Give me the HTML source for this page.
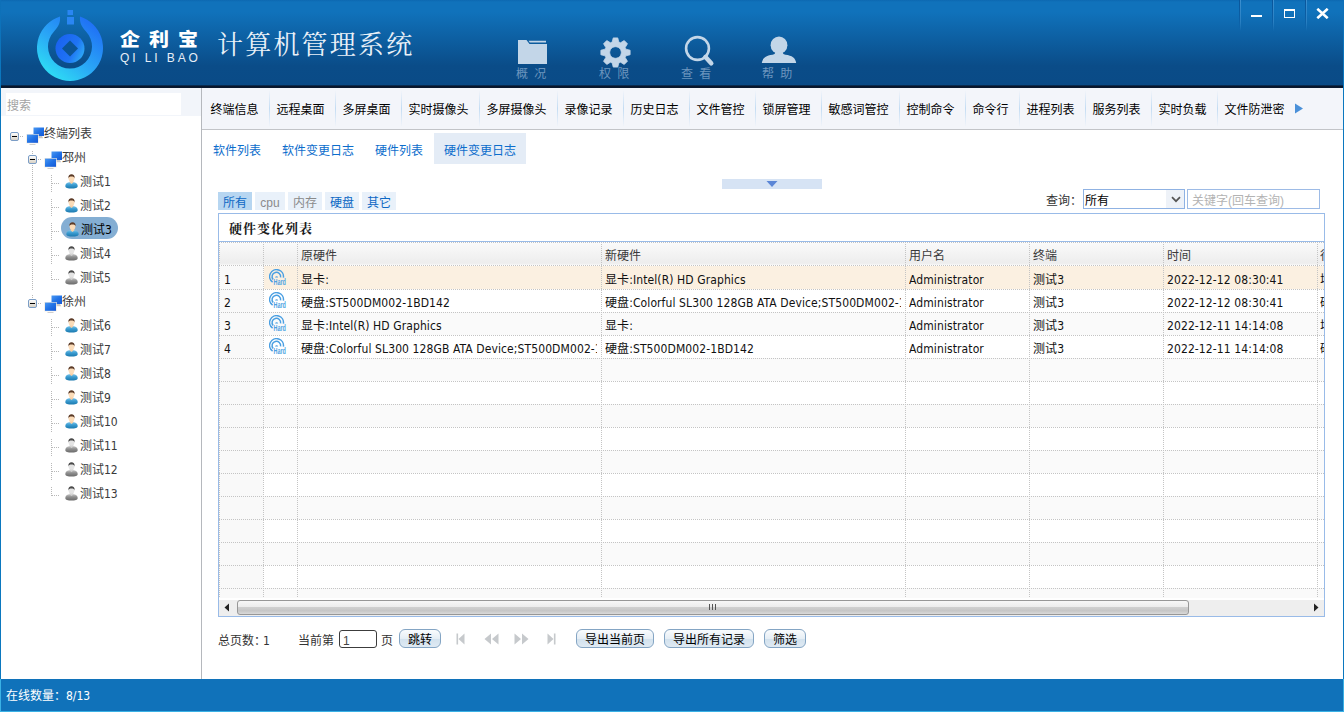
<!DOCTYPE html>
<html lang="zh-CN">
<head>
<meta charset="utf-8">
<title>企利宝 计算机管理系统</title>
<style>
*{box-sizing:border-box;margin:0;padding:0}
html,body{width:1344px;height:712px;overflow:hidden;background:#fff}
body{position:relative;font-family:"Liberation Sans","Noto Sans CJK SC",sans-serif;font-size:12px;color:#000}
.abs{position:absolute}
#hdr{left:0;top:0;width:1344px;height:86px;background:linear-gradient(#0d68b1 0px,#1072bb 2px,#1072bb 12px,#0a4c88 66px,#0a4b87 86px)}
#hdrline{left:0;top:85px;width:1344px;height:3px;background:linear-gradient(#093a68,#08152b 40%,#0a1a30)}
#lb{left:0;top:0;width:1px;height:712px;background:linear-gradient(#0e70b8 0,#0b78bf 88px,#0b78bf 679px,#3ab1e5 679px)}
#rb{left:1343px;top:0;width:1px;height:712px;background:linear-gradient(#0e70b8 0,#0b78bf 88px,#0b78bf 679px,#3ab1e5 679px)}
#status{left:0;top:679px;width:1344px;height:33px;background:#1072ba;color:#fff;line-height:34px;padding-left:6px;font-size:12px;font-family:"DejaVu Sans Condensed","Liberation Sans","Noto Sans CJK SC",sans-serif;border-bottom:1px solid #3ab1e5}
#leftp{left:1px;top:88px;width:200px;height:591px;background:#fff}
#vsep{left:201px;top:88px;width:1px;height:591px;background:#b5b8bd}
#searchbg{left:1px;top:88px;width:200px;height:28px;background:#f2f5fa}
#search{left:6px;top:93px;width:175px;height:22px;background:#fff;color:#a3a3a3;font-size:12px;line-height:27px;overflow:hidden;padding-left:1px}
#tabbar{left:202px;top:88px;width:1141px;height:42px;background:#f3f5fa;border-bottom:1px solid #c2c4c8}
.tab{position:absolute;top:88px;height:41px;line-height:44px;font-size:12px;color:#000;white-space:nowrap}
.tsep{position:absolute;top:90px;width:1px;height:37px;background:linear-gradient(#f3f5fa,#c3dcf3 50%,#f3f5fa)}
.stab{position:absolute;top:133px;height:31px;line-height:37px;overflow:hidden;font-size:12px;color:#0c6dcc;white-space:nowrap}
.chip{position:absolute;top:192px;height:18px;line-height:22px;overflow:hidden;font-size:12px;text-align:center;background:#e9f1fa;color:#0b5f9c;white-space:nowrap}
.tree{position:absolute;font-size:12px;line-height:19px;white-space:nowrap;color:#3a3a3a;font-family:"DejaVu Sans Condensed","Liberation Sans","Noto Sans CJK SC",sans-serif}
.lbl{font-size:12px;color:#333;white-space:nowrap;font-family:"DejaVu Sans Condensed","Liberation Sans","Noto Sans CJK SC",sans-serif}
.hdot{position:absolute;left:0;width:1105px;height:1px;background:repeating-linear-gradient(90deg,#c4c4c4 0,#c4c4c4 1px,transparent 1px,transparent 2px)}
.vdot{position:absolute;top:0;width:1px;height:358px;background:repeating-linear-gradient(180deg,#c4c4c4 0,#c4c4c4 1px,transparent 1px,transparent 2px)}
.gh{position:absolute;top:1px;height:22px;line-height:26px;font-size:12px;color:#3a3a3a;white-space:nowrap;overflow:hidden}
.gc{position:absolute;height:23px;line-height:28px;font-size:12px;color:#111;letter-spacing:0.1px;white-space:nowrap;overflow:hidden;font-family:"DejaVu Sans Condensed","Liberation Sans","Noto Sans CJK SC",sans-serif}
.btn{position:absolute;top:629px;height:19px;line-height:21px;overflow:hidden;font-size:12px;color:#000;text-align:center;border:1px solid #84a5c4;border-radius:6px;background:linear-gradient(#f9fbfd,#e6eef5 50%,#d3e2ee 55%,#dfeaf3);white-space:nowrap}
.tv{width:1px;background:repeating-linear-gradient(180deg,#b8b8b8 0,#b8b8b8 1px,transparent 1px,transparent 2px)}
.th{height:1px;background:repeating-linear-gradient(90deg,#b8b8b8 0,#b8b8b8 1px,transparent 1px,transparent 2px)}
</style>
</head>
<body>
<div id="hdr" class="abs"></div>
<div id="hdrline" class="abs"></div>
<div id="leftp" class="abs"></div>
<div id="searchbg" class="abs"></div>
<div id="search" class="abs">搜索</div>
<div id="vsep" class="abs"></div>
<div id="tabbar" class="abs"></div>
<!--TABS-->
<div class="tab" style="left:203.5px;width:66px;padding-left:7px">终端信息</div>
<div class="tsep" style="left:269.0px"></div>
<div class="tab" style="left:269.5px;width:66px;padding-left:7px">远程桌面</div>
<div class="tsep" style="left:335.0px"></div>
<div class="tab" style="left:335.5px;width:66px;padding-left:7px">多屏桌面</div>
<div class="tsep" style="left:401.0px"></div>
<div class="tab" style="left:401.5px;width:78px;padding-left:7px">实时摄像头</div>
<div class="tsep" style="left:479.0px"></div>
<div class="tab" style="left:479.5px;width:78px;padding-left:7px">多屏摄像头</div>
<div class="tsep" style="left:557.0px"></div>
<div class="tab" style="left:557.5px;width:66px;padding-left:7px">录像记录</div>
<div class="tsep" style="left:623.0px"></div>
<div class="tab" style="left:623.5px;width:66px;padding-left:7px">历史日志</div>
<div class="tsep" style="left:689.0px"></div>
<div class="tab" style="left:689.5px;width:66px;padding-left:7px">文件管控</div>
<div class="tsep" style="left:755.0px"></div>
<div class="tab" style="left:755.5px;width:66px;padding-left:7px">锁屏管理</div>
<div class="tsep" style="left:821.0px"></div>
<div class="tab" style="left:821.5px;width:78px;padding-left:7px">敏感词管控</div>
<div class="tsep" style="left:899.0px"></div>
<div class="tab" style="left:899.5px;width:66px;padding-left:7px">控制命令</div>
<div class="tsep" style="left:965.0px"></div>
<div class="tab" style="left:965.5px;width:54px;padding-left:7px">命令行</div>
<div class="tsep" style="left:1019.0px"></div>
<div class="tab" style="left:1019.5px;width:66px;padding-left:7px">进程列表</div>
<div class="tsep" style="left:1085.0px"></div>
<div class="tab" style="left:1085.5px;width:66px;padding-left:7px">服务列表</div>
<div class="tsep" style="left:1151.0px"></div>
<div class="tab" style="left:1151.5px;width:66px;padding-left:7px">实时负载</div>
<div class="tsep" style="left:1217.0px"></div>
<div class="tab" style="left:1217.5px;width:78px;padding-left:7px">文件防泄密</div>
<svg class="abs" style="left:1294px;top:103px" width="10" height="11" viewBox="0 0 10 11"><path d="M1 0.5 L9 5.5 L1 10.5 Z" fill="#4a90d9"/></svg>
<!--/TABS-->
<!--SUBTABS-->
<div class="stab" style="left:203px;width:68px;padding-left:10px;">软件列表</div>
<div class="stab" style="left:272px;width:92px;padding-left:10px;">软件变更日志</div>
<div class="stab" style="left:365px;width:68px;padding-left:10px;">硬件列表</div>
<div class="stab" style="left:434px;width:92px;padding-left:10px;background:#e4ecf6;">硬件变更日志</div>
<div class="abs" style="left:722px;top:179px;width:100px;height:10px;background:#d6e3f4"></div>
<svg class="abs" style="left:766px;top:181px" width="12" height="6" viewBox="0 0 12 6"><path d="M0.5 0 L11.5 0 L6 6 Z" fill="#5b86d6"/></svg>
<div class="chip" style="left:218px;width:34px;background:#b7d6f1;color:#0d68c4">所有</div>
<div class="chip" style="left:255px;width:30px;background:#e9f1fa;color:#8a8a8a">cpu</div>
<div class="chip" style="left:288px;width:34px;background:#e9f1fa;color:#8a8a8a">内存</div>
<div class="chip" style="left:325px;width:34px;background:#e9f1fa;color:#0d68c4">硬盘</div>
<div class="chip" style="left:362px;width:34px;background:#e9f1fa;color:#0d68c4">其它</div>
<!--/SUBTABS-->
<!--GRID-->
<div class="abs lbl" style="left:1046px;top:190px;line-height:22px">查询：</div>
<div class="abs" style="left:1083px;top:189px;width:102px;height:20px;border:1px solid #8fb2e3;background:#fff;line-height:22px;padding-left:1px;font-size:12px;overflow:hidden">所有</div>
<div class="abs" style="left:1166px;top:190px;width:18px;height:18px;background:#eef2f8"></div>
<svg class="abs" style="left:1171px;top:196px" width="10" height="7" viewBox="0 0 10 7"><path d="M1 1.2 L5 5.2 L9 1.2" fill="none" stroke="#555" stroke-width="1.7"/></svg>
<div class="abs" style="left:1187px;top:189px;width:133px;height:20px;border:1px solid #9dbbe6;background:#fff;line-height:22px;padding-left:4px;font-size:12px;color:#b3b3b3;white-space:nowrap;overflow:hidden">关键字(回车查询)</div>
<div class="abs" style="left:218px;top:213px;width:1107px;height:404px;border:1px solid #99bbe8;background:#fff"></div>
<div class="abs" style="left:229px;top:219px;line-height:19px;font-size:13px;font-weight:bold;letter-spacing:1px;color:#1a1a1a;font-family:'Liberation Serif','Noto Serif CJK SC',serif">硬件变化列表</div>
<div class="abs" style="left:219px;top:241px;width:1105px;height:1px;background:#99bbe8"></div>
<div class="abs" id="grid" style="left:219px;top:242px;width:1105px;height:358px;overflow:hidden;background:#fff">
<div class="abs" style="left:0;top:1px;width:1105px;height:22px;background:linear-gradient(#fafafa,#f3f3f3 50%,#ededed 92%,#f8f8f8)"></div>
<div class="abs" style="left:0;top:24px;width:44px;height:23px;background:#f9f9f9"></div>
<div class="abs" style="left:45px;top:24px;width:1060px;height:23px;background:#fbf0e1"></div>
<div class="abs" style="left:0;top:47px;width:1105px;height:23px;background:#fff"></div>
<div class="abs" style="left:0;top:47px;width:44px;height:23px;background:#f9f9f9"></div>
<div class="abs" style="left:0;top:70px;width:1105px;height:23px;background:#fafafa"></div>
<div class="abs" style="left:0;top:70px;width:44px;height:23px;background:#f9f9f9"></div>
<div class="abs" style="left:0;top:93px;width:1105px;height:23px;background:#fff"></div>
<div class="abs" style="left:0;top:93px;width:44px;height:23px;background:#f9f9f9"></div>
<div class="abs" style="left:0;top:116px;width:1105px;height:23px;background:#fafafa"></div>
<div class="abs" style="left:0;top:116px;width:44px;height:23px;background:#f9f9f9"></div>
<div class="abs" style="left:0;top:139px;width:1105px;height:23px;background:#fff"></div>
<div class="abs" style="left:0;top:139px;width:44px;height:23px;background:#f9f9f9"></div>
<div class="abs" style="left:0;top:162px;width:1105px;height:23px;background:#fafafa"></div>
<div class="abs" style="left:0;top:162px;width:44px;height:23px;background:#f9f9f9"></div>
<div class="abs" style="left:0;top:185px;width:1105px;height:23px;background:#fff"></div>
<div class="abs" style="left:0;top:185px;width:44px;height:23px;background:#f9f9f9"></div>
<div class="abs" style="left:0;top:208px;width:1105px;height:23px;background:#fafafa"></div>
<div class="abs" style="left:0;top:208px;width:44px;height:23px;background:#f9f9f9"></div>
<div class="abs" style="left:0;top:231px;width:1105px;height:23px;background:#fff"></div>
<div class="abs" style="left:0;top:231px;width:44px;height:23px;background:#f9f9f9"></div>
<div class="abs" style="left:0;top:254px;width:1105px;height:23px;background:#fafafa"></div>
<div class="abs" style="left:0;top:254px;width:44px;height:23px;background:#f9f9f9"></div>
<div class="abs" style="left:0;top:277px;width:1105px;height:23px;background:#fff"></div>
<div class="abs" style="left:0;top:277px;width:44px;height:23px;background:#f9f9f9"></div>
<div class="abs" style="left:0;top:300px;width:1105px;height:23px;background:#fafafa"></div>
<div class="abs" style="left:0;top:300px;width:44px;height:23px;background:#f9f9f9"></div>
<div class="abs" style="left:0;top:323px;width:1105px;height:23px;background:#fff"></div>
<div class="abs" style="left:0;top:323px;width:44px;height:23px;background:#f9f9f9"></div>
<div class="abs" style="left:0;top:346px;width:1105px;height:23px;background:#fafafa"></div>
<div class="abs" style="left:0;top:346px;width:44px;height:23px;background:#f9f9f9"></div>
<div class="hdot" style="top:0"></div>
<div class="hdot" style="top:23px"></div>
<div class="hdot" style="top:47px"></div>
<div class="hdot" style="top:70px"></div>
<div class="hdot" style="top:93px"></div>
<div class="hdot" style="top:116px"></div>
<div class="hdot" style="top:139px"></div>
<div class="hdot" style="top:162px"></div>
<div class="hdot" style="top:185px"></div>
<div class="hdot" style="top:208px"></div>
<div class="hdot" style="top:231px"></div>
<div class="hdot" style="top:254px"></div>
<div class="hdot" style="top:277px"></div>
<div class="hdot" style="top:300px"></div>
<div class="hdot" style="top:323px"></div>
<div class="hdot" style="top:346px"></div>
<div class="vdot" style="left:0px"></div>
<div class="vdot" style="left:44px"></div>
<div class="vdot" style="left:78px"></div>
<div class="vdot" style="left:382px"></div>
<div class="vdot" style="left:686px"></div>
<div class="vdot" style="left:810px"></div>
<div class="vdot" style="left:944px"></div>
<div class="vdot" style="left:1098px"></div>
<div class="gh" style="left:82px">原硬件</div>
<div class="gh" style="left:386px">新硬件</div>
<div class="gh" style="left:690px">用户名</div>
<div class="gh" style="left:814px">终端</div>
<div class="gh" style="left:948px">时间</div>
<div class="gh" style="left:1101px">行为</div>
<svg class="abs" style="left:50px;top:27px" width="18" height="17" viewBox="0 0 18 17"><g fill="none" stroke="#4a9fe2" stroke-width="1.5"><path d="M3.6 13.2 A6.9 6.9 0 1 1 14.4 8.6"/><path d="M4.1 10.4 A4.3 4.3 0 1 1 11.6 8.4"/></g><path d="M6 8.4 A1.7 1.7 0 0 1 9.2 8.4 Z" fill="#4a9fe2"/><text x="4.6" y="15.9" font-size="9.5" font-weight="bold" fill="#4a9fe2" font-family="'Liberation Sans Narrow','Liberation Sans',sans-serif" textLength="12.3" lengthAdjust="spacingAndGlyphs">Hard</text></svg>
<div class="gc" style="left:5px;top:24px;width:38px">1</div>
<div class="gc" style="left:82px;top:24px;width:296px">显卡:</div>
<div class="gc" style="left:386px;top:24px;width:296px">显卡:Intel(R) HD Graphics</div>
<div class="gc" style="left:690px;top:24px;width:118px">Administrator</div>
<div class="gc" style="left:814px;top:24px;width:128px">测试3</div>
<div class="gc" style="left:948px;top:24px;width:148px">2022-12-12 08:30:41</div>
<div class="gc" style="left:1101px;top:24px;width:4px">增加</div>
<svg class="abs" style="left:50px;top:50px" width="18" height="17" viewBox="0 0 18 17"><g fill="none" stroke="#4a9fe2" stroke-width="1.5"><path d="M3.6 13.2 A6.9 6.9 0 1 1 14.4 8.6"/><path d="M4.1 10.4 A4.3 4.3 0 1 1 11.6 8.4"/></g><path d="M6 8.4 A1.7 1.7 0 0 1 9.2 8.4 Z" fill="#4a9fe2"/><text x="4.6" y="15.9" font-size="9.5" font-weight="bold" fill="#4a9fe2" font-family="'Liberation Sans Narrow','Liberation Sans',sans-serif" textLength="12.3" lengthAdjust="spacingAndGlyphs">Hard</text></svg>
<div class="gc" style="left:5px;top:47px;width:38px">2</div>
<div class="gc" style="left:82px;top:47px;width:296px">硬盘:ST500DM002-1BD142</div>
<div class="gc" style="left:386px;top:47px;width:296px">硬盘:Colorful SL300 128GB ATA Device;ST500DM002-1BD142</div>
<div class="gc" style="left:690px;top:47px;width:118px">Administrator</div>
<div class="gc" style="left:814px;top:47px;width:128px">测试3</div>
<div class="gc" style="left:948px;top:47px;width:148px">2022-12-12 08:30:41</div>
<div class="gc" style="left:1101px;top:47px;width:4px">硬盘</div>
<svg class="abs" style="left:50px;top:73px" width="18" height="17" viewBox="0 0 18 17"><g fill="none" stroke="#4a9fe2" stroke-width="1.5"><path d="M3.6 13.2 A6.9 6.9 0 1 1 14.4 8.6"/><path d="M4.1 10.4 A4.3 4.3 0 1 1 11.6 8.4"/></g><path d="M6 8.4 A1.7 1.7 0 0 1 9.2 8.4 Z" fill="#4a9fe2"/><text x="4.6" y="15.9" font-size="9.5" font-weight="bold" fill="#4a9fe2" font-family="'Liberation Sans Narrow','Liberation Sans',sans-serif" textLength="12.3" lengthAdjust="spacingAndGlyphs">Hard</text></svg>
<div class="gc" style="left:5px;top:70px;width:38px">3</div>
<div class="gc" style="left:82px;top:70px;width:296px">显卡:Intel(R) HD Graphics</div>
<div class="gc" style="left:386px;top:70px;width:296px">显卡:</div>
<div class="gc" style="left:690px;top:70px;width:118px">Administrator</div>
<div class="gc" style="left:814px;top:70px;width:128px">测试3</div>
<div class="gc" style="left:948px;top:70px;width:148px">2022-12-11 14:14:08</div>
<div class="gc" style="left:1101px;top:70px;width:4px">增加</div>
<svg class="abs" style="left:50px;top:96px" width="18" height="17" viewBox="0 0 18 17"><g fill="none" stroke="#4a9fe2" stroke-width="1.5"><path d="M3.6 13.2 A6.9 6.9 0 1 1 14.4 8.6"/><path d="M4.1 10.4 A4.3 4.3 0 1 1 11.6 8.4"/></g><path d="M6 8.4 A1.7 1.7 0 0 1 9.2 8.4 Z" fill="#4a9fe2"/><text x="4.6" y="15.9" font-size="9.5" font-weight="bold" fill="#4a9fe2" font-family="'Liberation Sans Narrow','Liberation Sans',sans-serif" textLength="12.3" lengthAdjust="spacingAndGlyphs">Hard</text></svg>
<div class="gc" style="left:5px;top:93px;width:38px">4</div>
<div class="gc" style="left:82px;top:93px;width:296px">硬盘:Colorful SL300 128GB ATA Device;ST500DM002-1BD142</div>
<div class="gc" style="left:386px;top:93px;width:296px">硬盘:ST500DM002-1BD142</div>
<div class="gc" style="left:690px;top:93px;width:118px">Administrator</div>
<div class="gc" style="left:814px;top:93px;width:128px">测试3</div>
<div class="gc" style="left:948px;top:93px;width:148px">2022-12-11 14:14:08</div>
<div class="gc" style="left:1101px;top:93px;width:4px">硬盘</div>
</div>
<div class="abs" style="left:219px;top:598px;width:1105px;height:2px;background:#fff"></div>
<div class="abs" style="left:219px;top:600px;width:1105px;height:16px;background:#eee"></div>
<div class="abs" style="left:237px;top:600px;width:952px;height:15px;border:1px solid #979797;border-radius:3px;background:linear-gradient(#f7f7f7,#ececec 45%,#cfcfcf 50%,#c6c6c6 75%,#d9d9d9)"></div>
<svg class="abs" style="left:224px;top:603px" width="6" height="9" viewBox="0 0 6 9"><path d="M5 0.5 L0.5 4.5 L5 8.5 Z" fill="#222"/></svg>
<svg class="abs" style="left:1313px;top:603px" width="6" height="9" viewBox="0 0 6 9"><path d="M1 0.5 L5.5 4.5 L1 8.5 Z" fill="#222"/></svg>
<div class="abs" style="left:709px;top:604px;width:7px;height:6px;background:repeating-linear-gradient(90deg,#555 0,#555 1px,transparent 1px,transparent 3px)"></div>
<div class="abs lbl" style="left:218px;top:630px;line-height:23px">总页数：</div>
<div class="abs lbl" style="left:263px;top:630px;line-height:23px">1</div>
<div class="abs lbl" style="left:298px;top:630px;line-height:23px">当前第</div>
<div class="abs" style="left:339px;top:630px;width:38px;height:18px;border:1px solid #3c3c3c;border-radius:3px;background:#fff;line-height:20px;padding-left:3px;font-size:12px;color:#444">1</div>
<div class="abs lbl" style="left:381px;top:630px;line-height:23px">页</div>
<div class="btn" style="left:399px;width:42px">跳转</div>
<div class="btn" style="left:576px;width:78px">导出当前页</div>
<div class="btn" style="left:664px;width:90px">导出所有记录</div>
<div class="btn" style="left:764px;width:42px">筛选</div>
<svg class="abs" style="left:456px;top:633px" width="9" height="12" viewBox="0 0 9 12"><rect x="0.5" y="0.5" width="1.6" height="11" fill="#c6c9cc"/><path d="M8.5 0.5 L2.5 6 L8.5 11.5 Z" fill="#c6c9cc"/></svg>
<svg class="abs" style="left:484px;top:633px" width="15" height="12" viewBox="0 0 15 12"><path d="M7 0.5 L0.5 6 L7 11.5 Z M14.5 0.5 L8 6 L14.5 11.5 Z" fill="#c6c9cc"/></svg>
<svg class="abs" style="left:514px;top:633px" width="15" height="12" viewBox="0 0 15 12"><path d="M0.5 0.5 L7 6 L0.5 11.5 Z M8 0.5 L14.5 6 L8 11.5 Z" fill="#c6c9cc"/></svg>
<svg class="abs" style="left:547px;top:633px" width="9" height="12" viewBox="0 0 9 12"><rect x="6.9" y="0.5" width="1.6" height="11" fill="#c6c9cc"/><path d="M0.5 0.5 L6.5 6 L0.5 11.5 Z" fill="#c6c9cc"/></svg>
<!--/GRID-->
<!--TREE-->
<svg width="0" height="0" style="position:absolute"><defs>
<linearGradient id="gmon" x1="0" y1="0" x2="1" y2="1"><stop offset="0" stop-color="#4a98f2"/><stop offset="0.5" stop-color="#2273e6"/><stop offset="1" stop-color="#1558d6"/></linearGradient>
<linearGradient id="gbody" x1="0" y1="0" x2="0" y2="1"><stop offset="0" stop-color="#7cc8ee"/><stop offset="0.45" stop-color="#3a9bd0"/><stop offset="1" stop-color="#1b78ad"/></linearGradient>
<linearGradient id="gbodyg" x1="0" y1="0" x2="0" y2="1"><stop offset="0" stop-color="#c9c9c9"/><stop offset="0.45" stop-color="#8f8f8f"/><stop offset="1" stop-color="#6a6a6a"/></linearGradient>
<linearGradient id="gexp" x1="0" y1="0" x2="0" y2="1"><stop offset="0" stop-color="#ffffff"/><stop offset="1" stop-color="#d6cfc2"/></linearGradient>
</defs></svg>
<div class="abs th" style="left:20px;top:136px;width:4px"></div>
<div class="abs tv" style="left:32px;top:151px;height:4px"></div>
<div class="abs tv" style="left:32px;top:165px;height:125px"></div>
<div class="abs tv" style="left:32px;top:295px;height:3px"></div>
<div class="abs th" style="left:38px;top:159px;width:4px"></div>
<div class="abs th" style="left:38px;top:303px;width:4px"></div>
<div class="abs tv" style="left:51px;top:175px;height:18px"></div>
<div class="abs tv" style="left:51px;top:199px;height:18px"></div>
<div class="abs tv" style="left:51px;top:223px;height:18px"></div>
<div class="abs tv" style="left:51px;top:247px;height:18px"></div>
<div class="abs tv" style="left:51px;top:271px;height:9px"></div>
<div class="abs tv" style="left:51px;top:319px;height:18px"></div>
<div class="abs tv" style="left:51px;top:343px;height:18px"></div>
<div class="abs tv" style="left:51px;top:367px;height:18px"></div>
<div class="abs tv" style="left:51px;top:391px;height:18px"></div>
<div class="abs tv" style="left:51px;top:415px;height:18px"></div>
<div class="abs tv" style="left:51px;top:439px;height:18px"></div>
<div class="abs tv" style="left:51px;top:463px;height:18px"></div>
<div class="abs tv" style="left:51px;top:487px;height:9px"></div>
<svg class="abs" style="left:10px;top:132px" width="9" height="9" viewBox="0 0 9 9"><rect x="0.5" y="0.5" width="8" height="8" rx="1.5" fill="url(#gexp)" stroke="#7b9dc6"/><rect x="2" y="4" width="5" height="1" fill="#000"/></svg>
<svg class="abs" style="left:26px;top:127px" width="19" height="19" viewBox="0 0 19 19"><rect x="7.5" y="0.5" width="10.5" height="8.5" fill="url(#gmon)"/><path d="M12 9 h4 l1.2 2.2 h-5 z" fill="#c9c9c9"/><rect x="0.3" y="7" width="12.4" height="9.4" fill="#efeae2"/><rect x="1" y="7.6" width="11" height="8.2" fill="url(#gmon)"/><rect x="3.5" y="17" width="6" height="1" fill="#cfcfcf"/></svg>
<div class="tree" style="left:44px;top:125px">终端列表</div>
<svg class="abs" style="left:28px;top:155px" width="9" height="9" viewBox="0 0 9 9"><rect x="0.5" y="0.5" width="8" height="8" rx="1.5" fill="url(#gexp)" stroke="#7b9dc6"/><rect x="2" y="4" width="5" height="1" fill="#000"/></svg>
<svg class="abs" style="left:44px;top:151px" width="19" height="19" viewBox="0 0 19 19"><rect x="7.5" y="0.5" width="10.5" height="8.5" fill="url(#gmon)"/><path d="M12 9 h4 l1.2 2.2 h-5 z" fill="#c9c9c9"/><rect x="0.3" y="7" width="12.4" height="9.4" fill="#efeae2"/><rect x="1" y="7.6" width="11" height="8.2" fill="url(#gmon)"/><rect x="3.5" y="17" width="6" height="1" fill="#cfcfcf"/></svg>
<div class="tree" style="left:62px;top:149px">邳州</div>
<div class="abs th" style="left:52px;top:183px;width:8px"></div>
<svg class="abs" style="left:65px;top:174px" width="13" height="15" viewBox="0 0 13 15"><path d="M0.3 12.2 C0.3 9.2 3 8 6.5 8 C10 8 12.7 9.2 12.7 12.2 C12.7 13.8 10 14.6 6.5 14.6 C3 14.6 0.3 13.8 0.3 12.2 Z" fill="url(#gbody)"/><path d="M4.7 6.5 h3.6 v2 l-1.8 1.4 l-1.8 -1.4 z" fill="#f6cfa6"/><ellipse cx="6.5" cy="4.2" rx="2.9" ry="3.5" fill="#fbdcb9"/><path d="M3.4 4.4 C3 1.6 4.6 0.2 6.5 0.2 C8.4 0.2 10 1.6 9.6 4.4 C9.2 3 8.4 2.6 6.5 2.6 C4.6 2.6 3.8 3 3.4 4.4 Z" fill="#5b3b28"/></svg>
<div class="tree" style="left:80px;top:173px">测试1</div>
<div class="abs th" style="left:52px;top:207px;width:8px"></div>
<svg class="abs" style="left:65px;top:198px" width="13" height="15" viewBox="0 0 13 15"><path d="M0.3 12.2 C0.3 9.2 3 8 6.5 8 C10 8 12.7 9.2 12.7 12.2 C12.7 13.8 10 14.6 6.5 14.6 C3 14.6 0.3 13.8 0.3 12.2 Z" fill="url(#gbody)"/><path d="M4.7 6.5 h3.6 v2 l-1.8 1.4 l-1.8 -1.4 z" fill="#f6cfa6"/><ellipse cx="6.5" cy="4.2" rx="2.9" ry="3.5" fill="#fbdcb9"/><path d="M3.4 4.4 C3 1.6 4.6 0.2 6.5 0.2 C8.4 0.2 10 1.6 9.6 4.4 C9.2 3 8.4 2.6 6.5 2.6 C4.6 2.6 3.8 3 3.4 4.4 Z" fill="#5b3b28"/></svg>
<div class="tree" style="left:80px;top:197px">测试2</div>
<div class="abs th" style="left:52px;top:231px;width:8px"></div>
<div class="abs" style="left:61px;top:217px;width:57px;height:22px;border-radius:11px;background:#84aed3"></div>
<svg class="abs" style="left:66px;top:222px" width="13" height="15" viewBox="0 0 13 15"><path d="M0.3 12.2 C0.3 9.2 3 8 6.5 8 C10 8 12.7 9.2 12.7 12.2 C12.7 13.8 10 14.6 6.5 14.6 C3 14.6 0.3 13.8 0.3 12.2 Z" fill="url(#gbody)"/><path d="M4.7 6.5 h3.6 v2 l-1.8 1.4 l-1.8 -1.4 z" fill="#f6cfa6"/><ellipse cx="6.5" cy="4.2" rx="2.9" ry="3.5" fill="#fbdcb9"/><path d="M3.4 4.4 C3 1.6 4.6 0.2 6.5 0.2 C8.4 0.2 10 1.6 9.6 4.4 C9.2 3 8.4 2.6 6.5 2.6 C4.6 2.6 3.8 3 3.4 4.4 Z" fill="#5b3b28"/></svg>
<div class="tree" style="left:81px;top:221px;color:#000">测试3</div>
<div class="abs th" style="left:52px;top:255px;width:8px"></div>
<svg class="abs" style="left:65px;top:246px" width="13" height="15" viewBox="0 0 13 15"><path d="M0.3 12.2 C0.3 9.2 3 8 6.5 8 C10 8 12.7 9.2 12.7 12.2 C12.7 13.8 10 14.6 6.5 14.6 C3 14.6 0.3 13.8 0.3 12.2 Z" fill="url(#gbodyg)"/><path d="M4.7 6.5 h3.6 v2 l-1.8 1.4 l-1.8 -1.4 z" fill="#d2d2d2"/><ellipse cx="6.5" cy="4.2" rx="2.9" ry="3.5" fill="#e4e4e4"/><path d="M3.4 4.4 C3 1.6 4.6 0.2 6.5 0.2 C8.4 0.2 10 1.6 9.6 4.4 C9.2 3 8.4 2.6 6.5 2.6 C4.6 2.6 3.8 3 3.4 4.4 Z" fill="#4a4a4a"/></svg>
<div class="tree" style="left:80px;top:245px">测试4</div>
<div class="abs th" style="left:52px;top:279px;width:8px"></div>
<svg class="abs" style="left:65px;top:270px" width="13" height="15" viewBox="0 0 13 15"><path d="M0.3 12.2 C0.3 9.2 3 8 6.5 8 C10 8 12.7 9.2 12.7 12.2 C12.7 13.8 10 14.6 6.5 14.6 C3 14.6 0.3 13.8 0.3 12.2 Z" fill="url(#gbodyg)"/><path d="M4.7 6.5 h3.6 v2 l-1.8 1.4 l-1.8 -1.4 z" fill="#d2d2d2"/><ellipse cx="6.5" cy="4.2" rx="2.9" ry="3.5" fill="#e4e4e4"/><path d="M3.4 4.4 C3 1.6 4.6 0.2 6.5 0.2 C8.4 0.2 10 1.6 9.6 4.4 C9.2 3 8.4 2.6 6.5 2.6 C4.6 2.6 3.8 3 3.4 4.4 Z" fill="#4a4a4a"/></svg>
<div class="tree" style="left:80px;top:269px">测试5</div>
<svg class="abs" style="left:28px;top:299px" width="9" height="9" viewBox="0 0 9 9"><rect x="0.5" y="0.5" width="8" height="8" rx="1.5" fill="url(#gexp)" stroke="#7b9dc6"/><rect x="2" y="4" width="5" height="1" fill="#000"/></svg>
<svg class="abs" style="left:44px;top:295px" width="19" height="19" viewBox="0 0 19 19"><rect x="7.5" y="0.5" width="10.5" height="8.5" fill="url(#gmon)"/><path d="M12 9 h4 l1.2 2.2 h-5 z" fill="#c9c9c9"/><rect x="0.3" y="7" width="12.4" height="9.4" fill="#efeae2"/><rect x="1" y="7.6" width="11" height="8.2" fill="url(#gmon)"/><rect x="3.5" y="17" width="6" height="1" fill="#cfcfcf"/></svg>
<div class="tree" style="left:62px;top:293px">徐州</div>
<div class="abs th" style="left:52px;top:327px;width:8px"></div>
<svg class="abs" style="left:65px;top:318px" width="13" height="15" viewBox="0 0 13 15"><path d="M0.3 12.2 C0.3 9.2 3 8 6.5 8 C10 8 12.7 9.2 12.7 12.2 C12.7 13.8 10 14.6 6.5 14.6 C3 14.6 0.3 13.8 0.3 12.2 Z" fill="url(#gbody)"/><path d="M4.7 6.5 h3.6 v2 l-1.8 1.4 l-1.8 -1.4 z" fill="#f6cfa6"/><ellipse cx="6.5" cy="4.2" rx="2.9" ry="3.5" fill="#fbdcb9"/><path d="M3.4 4.4 C3 1.6 4.6 0.2 6.5 0.2 C8.4 0.2 10 1.6 9.6 4.4 C9.2 3 8.4 2.6 6.5 2.6 C4.6 2.6 3.8 3 3.4 4.4 Z" fill="#5b3b28"/></svg>
<div class="tree" style="left:80px;top:317px">测试6</div>
<div class="abs th" style="left:52px;top:351px;width:8px"></div>
<svg class="abs" style="left:65px;top:342px" width="13" height="15" viewBox="0 0 13 15"><path d="M0.3 12.2 C0.3 9.2 3 8 6.5 8 C10 8 12.7 9.2 12.7 12.2 C12.7 13.8 10 14.6 6.5 14.6 C3 14.6 0.3 13.8 0.3 12.2 Z" fill="url(#gbody)"/><path d="M4.7 6.5 h3.6 v2 l-1.8 1.4 l-1.8 -1.4 z" fill="#f6cfa6"/><ellipse cx="6.5" cy="4.2" rx="2.9" ry="3.5" fill="#fbdcb9"/><path d="M3.4 4.4 C3 1.6 4.6 0.2 6.5 0.2 C8.4 0.2 10 1.6 9.6 4.4 C9.2 3 8.4 2.6 6.5 2.6 C4.6 2.6 3.8 3 3.4 4.4 Z" fill="#5b3b28"/></svg>
<div class="tree" style="left:80px;top:341px">测试7</div>
<div class="abs th" style="left:52px;top:375px;width:8px"></div>
<svg class="abs" style="left:65px;top:366px" width="13" height="15" viewBox="0 0 13 15"><path d="M0.3 12.2 C0.3 9.2 3 8 6.5 8 C10 8 12.7 9.2 12.7 12.2 C12.7 13.8 10 14.6 6.5 14.6 C3 14.6 0.3 13.8 0.3 12.2 Z" fill="url(#gbody)"/><path d="M4.7 6.5 h3.6 v2 l-1.8 1.4 l-1.8 -1.4 z" fill="#f6cfa6"/><ellipse cx="6.5" cy="4.2" rx="2.9" ry="3.5" fill="#fbdcb9"/><path d="M3.4 4.4 C3 1.6 4.6 0.2 6.5 0.2 C8.4 0.2 10 1.6 9.6 4.4 C9.2 3 8.4 2.6 6.5 2.6 C4.6 2.6 3.8 3 3.4 4.4 Z" fill="#5b3b28"/></svg>
<div class="tree" style="left:80px;top:365px">测试8</div>
<div class="abs th" style="left:52px;top:399px;width:8px"></div>
<svg class="abs" style="left:65px;top:390px" width="13" height="15" viewBox="0 0 13 15"><path d="M0.3 12.2 C0.3 9.2 3 8 6.5 8 C10 8 12.7 9.2 12.7 12.2 C12.7 13.8 10 14.6 6.5 14.6 C3 14.6 0.3 13.8 0.3 12.2 Z" fill="url(#gbody)"/><path d="M4.7 6.5 h3.6 v2 l-1.8 1.4 l-1.8 -1.4 z" fill="#f6cfa6"/><ellipse cx="6.5" cy="4.2" rx="2.9" ry="3.5" fill="#fbdcb9"/><path d="M3.4 4.4 C3 1.6 4.6 0.2 6.5 0.2 C8.4 0.2 10 1.6 9.6 4.4 C9.2 3 8.4 2.6 6.5 2.6 C4.6 2.6 3.8 3 3.4 4.4 Z" fill="#5b3b28"/></svg>
<div class="tree" style="left:80px;top:389px">测试9</div>
<div class="abs th" style="left:52px;top:423px;width:8px"></div>
<svg class="abs" style="left:65px;top:414px" width="13" height="15" viewBox="0 0 13 15"><path d="M0.3 12.2 C0.3 9.2 3 8 6.5 8 C10 8 12.7 9.2 12.7 12.2 C12.7 13.8 10 14.6 6.5 14.6 C3 14.6 0.3 13.8 0.3 12.2 Z" fill="url(#gbody)"/><path d="M4.7 6.5 h3.6 v2 l-1.8 1.4 l-1.8 -1.4 z" fill="#f6cfa6"/><ellipse cx="6.5" cy="4.2" rx="2.9" ry="3.5" fill="#fbdcb9"/><path d="M3.4 4.4 C3 1.6 4.6 0.2 6.5 0.2 C8.4 0.2 10 1.6 9.6 4.4 C9.2 3 8.4 2.6 6.5 2.6 C4.6 2.6 3.8 3 3.4 4.4 Z" fill="#5b3b28"/></svg>
<div class="tree" style="left:80px;top:413px">测试10</div>
<div class="abs th" style="left:52px;top:447px;width:8px"></div>
<svg class="abs" style="left:65px;top:438px" width="13" height="15" viewBox="0 0 13 15"><path d="M0.3 12.2 C0.3 9.2 3 8 6.5 8 C10 8 12.7 9.2 12.7 12.2 C12.7 13.8 10 14.6 6.5 14.6 C3 14.6 0.3 13.8 0.3 12.2 Z" fill="url(#gbodyg)"/><path d="M4.7 6.5 h3.6 v2 l-1.8 1.4 l-1.8 -1.4 z" fill="#d2d2d2"/><ellipse cx="6.5" cy="4.2" rx="2.9" ry="3.5" fill="#e4e4e4"/><path d="M3.4 4.4 C3 1.6 4.6 0.2 6.5 0.2 C8.4 0.2 10 1.6 9.6 4.4 C9.2 3 8.4 2.6 6.5 2.6 C4.6 2.6 3.8 3 3.4 4.4 Z" fill="#4a4a4a"/></svg>
<div class="tree" style="left:80px;top:437px">测试11</div>
<div class="abs th" style="left:52px;top:471px;width:8px"></div>
<svg class="abs" style="left:65px;top:462px" width="13" height="15" viewBox="0 0 13 15"><path d="M0.3 12.2 C0.3 9.2 3 8 6.5 8 C10 8 12.7 9.2 12.7 12.2 C12.7 13.8 10 14.6 6.5 14.6 C3 14.6 0.3 13.8 0.3 12.2 Z" fill="url(#gbodyg)"/><path d="M4.7 6.5 h3.6 v2 l-1.8 1.4 l-1.8 -1.4 z" fill="#d2d2d2"/><ellipse cx="6.5" cy="4.2" rx="2.9" ry="3.5" fill="#e4e4e4"/><path d="M3.4 4.4 C3 1.6 4.6 0.2 6.5 0.2 C8.4 0.2 10 1.6 9.6 4.4 C9.2 3 8.4 2.6 6.5 2.6 C4.6 2.6 3.8 3 3.4 4.4 Z" fill="#4a4a4a"/></svg>
<div class="tree" style="left:80px;top:461px">测试12</div>
<div class="abs th" style="left:52px;top:495px;width:8px"></div>
<svg class="abs" style="left:65px;top:486px" width="13" height="15" viewBox="0 0 13 15"><path d="M0.3 12.2 C0.3 9.2 3 8 6.5 8 C10 8 12.7 9.2 12.7 12.2 C12.7 13.8 10 14.6 6.5 14.6 C3 14.6 0.3 13.8 0.3 12.2 Z" fill="url(#gbodyg)"/><path d="M4.7 6.5 h3.6 v2 l-1.8 1.4 l-1.8 -1.4 z" fill="#d2d2d2"/><ellipse cx="6.5" cy="4.2" rx="2.9" ry="3.5" fill="#e4e4e4"/><path d="M3.4 4.4 C3 1.6 4.6 0.2 6.5 0.2 C8.4 0.2 10 1.6 9.6 4.4 C9.2 3 8.4 2.6 6.5 2.6 C4.6 2.6 3.8 3 3.4 4.4 Z" fill="#4a4a4a"/></svg>
<div class="tree" style="left:80px;top:485px">测试13</div>
<!--/TREE-->
<!--HEADER-->
<svg class="abs" style="left:34px;top:6px" width="74" height="78" viewBox="34 6 74 78">
<defs>
<linearGradient id="lg1" x1="0.2" y1="1" x2="0.9" y2="0.1"><stop offset="0" stop-color="#2fe4f4"/><stop offset="0.45" stop-color="#2aa8f6"/><stop offset="1" stop-color="#1f6df5"/></linearGradient>
<linearGradient id="lg2" x1="0" y1="0.3" x2="1" y2="0.8"><stop offset="0" stop-color="#1a62f0"/><stop offset="0.6" stop-color="#1f74f4"/><stop offset="1" stop-color="#2fb0f6"/></linearGradient>
</defs>
<path d="M60 16.5 C60.5 24 58 27 54 31.5 A22 22 0 1 0 86 31.5 C82 27 79.5 24 80 16.5 A33 33 0 1 1 60 16.5 Z" fill="url(#lg1)"/>
<circle cx="70" cy="48.5" r="14.5" fill="url(#lg2)"/>
<path d="M70 40.5 L78 48.5 L70 56.5 L62 48.5 Z" fill="#0b5597"/>
<rect x="67.5" y="10" width="5.5" height="5" fill="#2a86f3"/>
<rect x="67" y="17" width="7" height="7.5" fill="#2a86f3"/>
</svg>
<div class="abs" style="left:120px;top:26px;font-size:18.5px;line-height:28px;font-weight:900;letter-spacing:8.35px;transform:scaleX(1.08);transform-origin:0 0;color:#fff;white-space:nowrap;font-family:'Liberation Sans','Noto Sans CJK SC',sans-serif">企利宝</div>
<div class="abs" style="left:120px;top:50px;font-size:12px;line-height:16px;letter-spacing:2.9px;color:#e6eef7;white-space:nowrap;font-family:'Liberation Sans',sans-serif">QI LI BAO</div>
<div class="abs" style="left:217px;top:27px;font-size:26px;line-height:38px;letter-spacing:2.2px;color:#eaf1f8;white-space:nowrap;font-family:'Liberation Serif','Noto Serif CJK SC',serif">计算机管理系统</div>
<svg class="abs" style="left:517px;top:39px" width="31" height="26" viewBox="0 0 31 26"><path d="M1 1 H9.5 L12.5 5 H30 V25 H1 Z" fill="#c3d6e8"/><path d="M11.5 1.8 H29 V3.6 H12.8 Z" fill="#c3d6e8"/></svg>
<svg class="abs" style="left:599.5px;top:36.5px" width="31" height="31" viewBox="0 0 31 31"><path d="M13.22 0.88 L17.78 0.88 L18.83 5.12 L20.48 5.81 L24.22 3.54 L27.46 6.78 L25.19 10.51 L25.88 12.17 L30.12 13.22 L30.12 17.78 L25.88 18.83 L25.19 20.48 L27.46 24.22 L24.22 27.46 L20.49 25.19 L18.83 25.88 L17.78 30.12 L13.22 30.12 L12.17 25.88 L10.52 25.19 L6.78 27.46 L3.54 24.22 L5.81 20.49 L5.12 18.83 L0.88 17.78 L0.88 13.22 L5.12 12.17 L5.81 10.52 L3.54 6.78 L6.78 3.54 L10.51 5.81 L12.17 5.12 Z M15.5 9.7 a5.8 5.8 0 1 0 0.01 0 Z" fill="#c3d6e8" fill-rule="evenodd" stroke="#c3d6e8" stroke-width="0.8" stroke-linejoin="round"/></svg>
<svg class="abs" style="left:683px;top:34px" width="33" height="33" viewBox="0 0 33 33"><circle cx="14.5" cy="14.5" r="11.4" fill="none" stroke="#c3d6e8" stroke-width="2.6"/><path d="M22.5 23 L28.2 29.2" stroke="#c3d6e8" stroke-width="4.6" stroke-linecap="round"/></svg>
<svg class="abs" style="left:761px;top:36px" width="36" height="28" viewBox="0 0 36 28"><ellipse cx="18" cy="9.2" rx="8.4" ry="8.6" fill="#c3d6e8"/><path d="M0.8 27 C1.5 22 5 19.5 11.5 18.8 C14 18.4 14.5 17 14.5 15.5 H21.5 C21.5 17 22 18.4 24.5 18.8 C31 19.5 34.5 22 35.2 27 Z" fill="#c3d6e8"/></svg>
<div class="abs" style="left:516px;top:66px;width:32px;font-size:12px;line-height:16px;color:#6c95be;white-space:pre;text-align:left;letter-spacing:1.5px">概 况</div>
<div class="abs" style="left:599px;top:66px;width:32px;font-size:12px;line-height:16px;color:#6c95be;white-space:pre;text-align:left;letter-spacing:1.5px">权 限</div>
<div class="abs" style="left:681px;top:66px;width:32px;font-size:12px;line-height:16px;color:#6c95be;white-space:pre;text-align:left;letter-spacing:1.5px">查 看</div>
<div class="abs" style="left:762px;top:66px;width:32px;font-size:12px;line-height:16px;color:#6c95be;white-space:pre;text-align:left;letter-spacing:1.5px">帮 助</div>
<div class="abs" style="left:1239px;top:0;width:1px;height:31px;background:linear-gradient(#0a559a,#0c60a6 70%,rgba(12,96,166,0))"></div>
<div class="abs" style="left:1240px;top:0;width:1px;height:31px;background:linear-gradient(#3b8fcf,#2a80c2 70%,rgba(42,128,194,0))"></div>
<div class="abs" style="left:1272px;top:0;width:1px;height:31px;background:linear-gradient(#0a559a,#0c60a6 70%,rgba(12,96,166,0))"></div>
<div class="abs" style="left:1273px;top:0;width:1px;height:31px;background:linear-gradient(#3b8fcf,#2a80c2 70%,rgba(42,128,194,0))"></div>
<div class="abs" style="left:1305px;top:0;width:1px;height:31px;background:linear-gradient(#0a559a,#0c60a6 70%,rgba(12,96,166,0))"></div>
<div class="abs" style="left:1306px;top:0;width:1px;height:31px;background:linear-gradient(#3b8fcf,#2a80c2 70%,rgba(42,128,194,0))"></div>
<div class="abs" style="left:1251px;top:15px;width:11px;height:2px;background:#fff"></div>
<div class="abs" style="left:1284px;top:9px;width:11px;height:9px;border:1px solid #fff;border-top-width:2px"></div>
<svg class="abs" style="left:1316px;top:8px" width="13" height="11" viewBox="0 0 13 11"><path d="M1.3 0.8 L11.7 10.2 M11.7 0.8 L1.3 10.2" stroke="#fff" stroke-width="2.6"/></svg>
<!--/HEADER-->
<div id="status" class="abs">在线数量：8/13</div>
<div id="lb" class="abs"></div>
<div id="rb" class="abs"></div>
</body>
</html>
